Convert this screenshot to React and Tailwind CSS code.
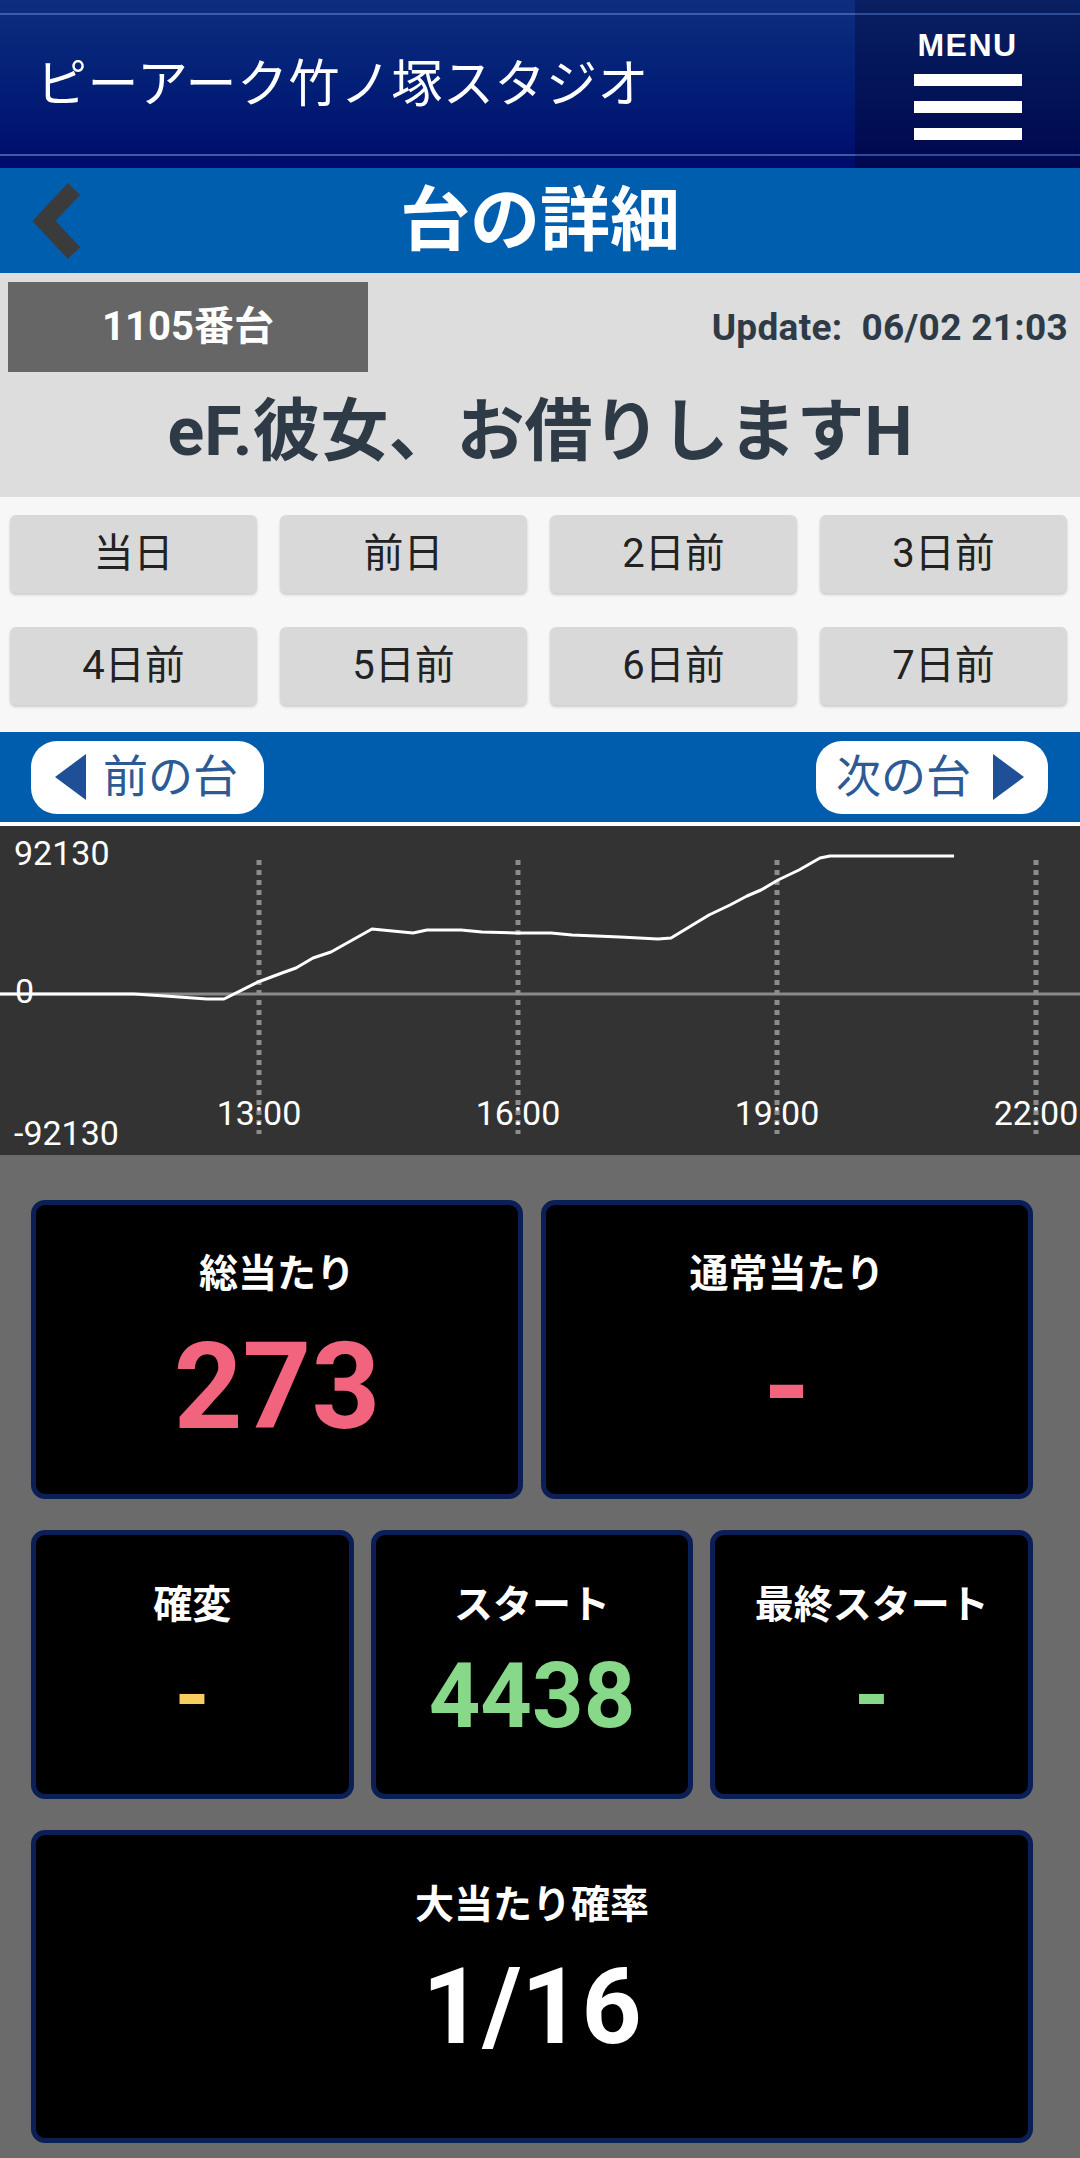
import React from "react";

const days = ["当日", "前日", "2日前", "3日前", "4日前", "5日前", "6日前", "7日前"];

// グラフの折れ線 (チャート内座標)
const points = [
    [0, 168], [134, 168], [165, 170], [207, 173], [224, 173], [258, 156], [282, 147],
    [296, 142], [313, 132], [331, 126], [372, 103], [413, 107], [427, 104], [461, 104],
    [482, 106], [517, 107], [551, 107], [572, 109], [620, 111], [658, 113], [671, 112],
    [709, 89], [730, 79], [747, 70], [761, 64], [778, 54], [799, 44], [820, 32],
    [830, 30], [954, 30],
];

const ticks = [
    { x: 259, label: "13:00" },
    { x: 518, label: "16:00" },
    { x: 777, label: "19:00" },
    { x: 1036, label: "22:00" },
];

const chartFont = "Roboto, 'Noto Sans CJK JP', sans-serif";

const Chart = () => {
    return (
        <div className="bg-[#333333] h-[329px]">
            <svg width="1080" height="329" viewBox="0 0 1080 329">
                <line x1="0" y1="168" x2="1080" y2="168" stroke="#8a8a8a" strokeWidth="3" />
                {ticks.map((t) => (
                    <line
                        key={t.x}
                        x1={t.x}
                        y1="34"
                        x2={t.x}
                        y2="308"
                        stroke="#8c8c8c"
                        strokeWidth="5"
                        strokeDasharray="5 5"
                    />
                ))}
                <polyline
                    points={points.map((p) => p.join(",")).join(" ")}
                    fill="none"
                    stroke="#ffffff"
                    strokeWidth="3"
                    strokeLinejoin="round"
                />
                <g fill="#ffffff" fontFamily={chartFont} fontSize="34">
                    <text x="14" y="39">92130</text>
                    <text x="15" y="177">0</text>
                    <text x="14" y="319">-92130</text>
                    {ticks.map((t) => (
                        <text key={t.label} x={t.x} y="299" textAnchor="middle">{t.label}</text>
                    ))}
                </g>
            </svg>
        </div>
    );
};

const App = () => {
    return (
        <div className="w-[1080px] min-h-[2158px] bg-[#6b6b6b] font-[Roboto,'Noto_Sans_CJK_JP',sans-serif]">
            {/* header */}
            <header className="flex h-[168px] bg-gradient-to-b from-[#0d2e80] to-[#000a6c]">
                <div className="flex-1 pt-[13px] pb-[12px]">
                    <div className="h-full border-y-2 border-[#3d5ba6] flex items-center pl-[36px]">
                        <h1 className="text-white text-[51px] font-normal leading-none tracking-[0.5px]">ピーアーク竹ノ塚スタジオ</h1>
                    </div>
                </div>
                <div className="w-[225px] pt-[13px] pb-[12px] bg-gradient-to-b from-[#0a1f62] to-[#00074f]">
                    <div className="h-full border-y-2 border-[#2f4c96] flex flex-col items-center pt-[14px]">
                        <span className="text-white text-[32px] font-black leading-none tracking-[1.5px] font-['Liberation_Sans',sans-serif]">MENU</span>
                        <div className="flex flex-col gap-[15px] mt-[13px]">
                            <span className="block w-[108px] h-[12px] bg-white" />
                            <span className="block w-[108px] h-[12px] bg-white" />
                            <span className="block w-[108px] h-[12px] bg-white" />
                        </div>
                    </div>
                </div>
            </header>

            {/* title bar */}
            <div className="h-[105px] bg-[#005eae] grid grid-cols-[140px_1fr_140px] items-center">
                <div className="pl-[30px] flex items-center">
                    <svg width="60" height="80" viewBox="0 0 60 80">
                        <polyline points="44,8 14,40 44,72" fill="none" stroke="#3b3b3b" strokeWidth="17" />
                    </svg>
                </div>
                <h2 className="text-center text-white text-[70px] font-bold leading-none">台の詳細</h2>
                <div />
            </div>

            {/* machine info */}
            <section className="bg-[#dddddd] h-[224px] pt-[9px]">
                <div className="flex items-center justify-between pl-[8px] pr-[12px]">
                    <div className="w-[360px] h-[90px] bg-[#666666] flex items-center justify-center text-white text-[40px] font-bold leading-none">
                        1105番台
                    </div>
                    <div className="text-[#2e3b47] text-[37px] font-bold leading-none tracking-[0.3px]">
                        Update:&nbsp; 06/02 21:03
                    </div>
                </div>
                <h3 className="mt-[26px] text-center text-[#2e3b47] text-[68px] font-bold leading-none">
                    eF.彼女、お借りしますH
                </h3>
            </section>

            {/* day selector */}
            <section className="bg-[#f7f7f7] h-[235px] pt-[18px] pl-[10px] pr-[13px]">
                <div className="grid grid-cols-4 gap-x-[23px] gap-y-[34px]">
                    {days.map((d) => (
                        <button
                            key={d}
                            className="h-[78px] rounded-[6px] bg-[#d9d9d9] shadow-[0_2px_3px_rgba(0,0,0,0.18)] text-[#222222] text-[40px] leading-none flex items-center justify-center"
                        >
                            {d}
                        </button>
                    ))}
                </div>
            </section>

            {/* prev / next */}
            <nav className="h-[90px] bg-[#005cac] flex items-center justify-between pl-[31px] pr-[32px] border-b-4 border-white box-content">
                <button className="w-[233px] h-[73px] rounded-[26px] bg-white flex items-center pl-[24px] gap-[17px] text-[#2c5a94] text-[45px] leading-none">
                    <svg width="31" height="46" viewBox="0 0 31 46">
                        <polygon points="0,23 31,0 31,46" fill="#1f4f96" />
                    </svg>
                    <span>前の台</span>
                </button>
                <button className="w-[232px] h-[73px] rounded-[26px] bg-white flex items-center justify-end pr-[24px] gap-[22px] text-[#2c5a94] text-[45px] leading-none">
                    <span>次の台</span>
                    <svg width="31" height="46" viewBox="0 0 31 46">
                        <polygon points="31,23 0,0 0,46" fill="#1f4f96" />
                    </svg>
                </button>
            </nav>

            <Chart />

            {/* stats */}
            <section className="pt-[45px] pl-[31px] pb-[15px]">
                <div className="w-[1002px] flex flex-col gap-[31px]">
                    <div className="grid grid-cols-2 gap-[18px]">
                        <div className="h-[299px] bg-black border-[5px] border-[#0b1f56] rounded-[14px] flex flex-col items-center pt-[50px]">
                            <span className="text-white text-[39px] font-bold leading-none">総当たり</span>
                            <span className="mt-[33px] text-[#f2637e] text-[120px] font-bold leading-none">273</span>
                        </div>
                        <div className="h-[299px] bg-black border-[5px] border-[#0b1f56] rounded-[14px] flex flex-col items-center pt-[50px]">
                            <span className="text-white text-[39px] font-bold leading-none">通常当たり</span>
                            <span className="mt-[33px] text-[#f2637e] text-[120px] font-bold leading-none">-</span>
                        </div>
                    </div>

                    <div className="grid grid-cols-3 gap-[17px]">
                        <div className="h-[269px] bg-black border-[5px] border-[#0b1f56] rounded-[14px] flex flex-col items-center pt-[51px]">
                            <span className="text-white text-[39px] font-bold leading-none">確変</span>
                            <span className="mt-[27px] text-[#f6cd5e] text-[90px] font-bold leading-none">-</span>
                        </div>
                        <div className="h-[269px] bg-black border-[5px] border-[#0b1f56] rounded-[14px] flex flex-col items-center pt-[51px]">
                            <span className="text-white text-[39px] font-bold leading-none">スタート</span>
                            <span className="mt-[27px] text-[#88d88a] text-[90px] font-bold leading-none">4438</span>
                        </div>
                        <div className="h-[269px] bg-black border-[5px] border-[#0b1f56] rounded-[14px] flex flex-col items-center pt-[51px]">
                            <span className="text-white text-[39px] font-bold leading-none">最終スタート</span>
                            <span className="mt-[27px] text-[#88d88a] text-[90px] font-bold leading-none">-</span>
                        </div>
                    </div>

                    <div className="h-[313px] bg-black border-[5px] border-[#0b1f56] rounded-[14px] flex flex-col items-center pt-[51px]">
                        <span className="text-white text-[39px] font-bold leading-none">大当たり確率</span>
                        <span className="mt-[30px] text-white text-[105px] font-bold leading-none">1/16</span>
                    </div>
                </div>
            </section>
        </div>
    );
};

export default App;
